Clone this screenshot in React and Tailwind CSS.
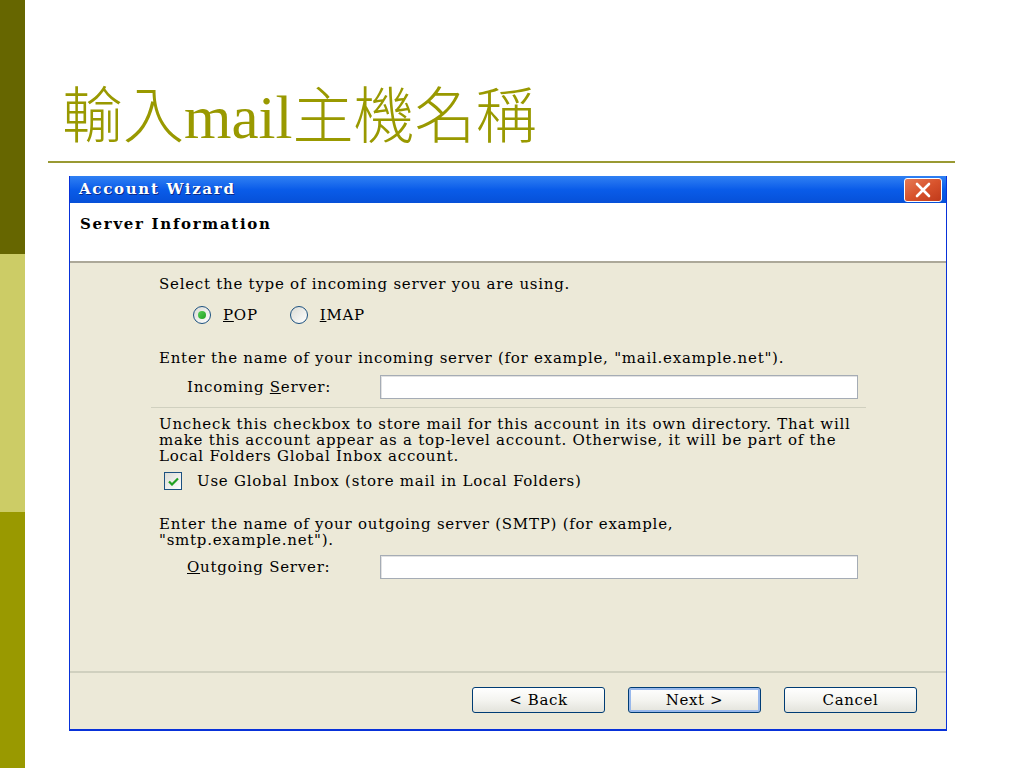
import React from 'react'

const serif = "font-['DejaVu_Serif','Liberation_Serif',serif]"

function Radio({ checked }) {
  return (
    <span className="flex items-center justify-center w-[18px] h-[18px] rounded-full border border-[#1c5180] bg-gradient-to-br from-[#dcdcd5] to-white">
      {checked && <span className="w-[8px] h-[8px] rounded-full bg-gradient-to-br from-[#55d055] to-[#21a121]" />}
    </span>
  )
}

function Checkbox() {
  return (
    <span className="flex items-center justify-center w-[18px] h-[18px] border border-[#1c5180] bg-gradient-to-br from-[#dcdcd5] to-white">
      <svg width="11" height="9" viewBox="0 0 11 9">
        <path d="M1 4.5 L4 7.5 L10 1.5" fill="none" stroke="#21a121" strokeWidth="2.2" />
      </svg>
    </span>
  )
}

function Button({ children, primary }) {
  return (
    <div className={`w-[133px] h-[26px] rounded-[3px] border border-[#003c74] bg-gradient-to-b from-white via-[#f4f4f0] to-[#e3e3db] flex items-center justify-center ${primary ? 'shadow-[inset_0_0_0_2px_#98b8ec]' : ''}`}>
      <span className="text-[15px] tracking-[0.6px] text-black">{children}</span>
    </div>
  )
}

function Field({ label, u, rest }) {
  return (
    <div className="flex items-center h-[24px]">
      <span className="w-[221px] pl-[28px]">
        {label}<span className="underline">{u}</span>{rest}
      </span>
      <div className="w-[478px] h-[24px] bg-white border border-[#a5acb5] shadow-[inset_1px_1px_0_#e2e2e2]" />
    </div>
  )
}

export default function App() {
  return (
    <div className="flex w-[1024px] h-[768px] bg-white overflow-hidden">
      <div className="flex flex-col w-[25px] shrink-0">
        <div className="h-[254px] bg-[#666600]" />
        <div className="h-[258px] bg-[#cccc66]" />
        <div className="flex-1 bg-[#999900]" />
      </div>

      <div className="flex flex-col flex-1 pt-[80px]">
        <h1 className="ml-[37px] h-[76px] text-[61px] leading-[76px] text-[#999900] font-['Liberation_Serif','Noto_Sans_CJK_TC',serif] font-light">
          輸入mail主機名稱
        </h1>
        <div className="ml-[23px] w-[907px] h-[2px] bg-[#999933] mt-[5px]" />

        <div className={`ml-[44px] mt-[13px] w-[878px] h-[555px] flex flex-col border-x border-b-2 border-[#0831d9] ${serif} text-black`}>
          <div className="h-[27px] flex items-center justify-between pl-[9px] pr-[4px] bg-gradient-to-b from-[#2f80f3] via-[#0a5ce9] to-[#0650d8]">
            <span className="text-white font-bold text-[15px] tracking-[1.7px] [text-shadow:1px_1px_0_#0a2a8a]">Account Wizard</span>
            <div className="w-[38px] h-[24px] rounded-[3px] border border-white bg-gradient-to-br from-[#e57a55] via-[#d8532c] to-[#c0391a] flex items-center justify-center">
              <svg width="18" height="16" viewBox="0 0 18 16">
                <path d="M3 2 L15 14 M15 2 L3 14" stroke="white" strokeWidth="2.6" strokeLinecap="round" />
              </svg>
            </div>
          </div>

          <div className="h-[60px] bg-white border-b-2 border-[#aca899] pl-[10px] pt-[9px]">
            <span className="font-bold text-[15px] tracking-[1.7px]">Server Information</span>
          </div>

          <div className="flex-1 bg-[#ece9d8] flex flex-col pl-[89px] pt-[13px] text-[15px] leading-[16px] tracking-[0.75px] whitespace-nowrap">
            <p>Select the type of incoming server you are using.</p>
            <div className="flex items-center mt-[14px] ml-[34px] gap-[12px]">
              <Radio checked />
              <span><span className="underline">P</span>OP</span>
              <span className="ml-[20px]"><Radio /></span>
              <span><span className="underline">I</span>MAP</span>
            </div>
            <p className="mt-[26px]">Enter the name of your incoming server (for example, "mail.example.net").</p>
            <div className="mt-[9px]">
              <Field label="Incoming " u="S" rest="erver:" />
            </div>
            <div className="mt-[8px] -ml-[8px] w-[715px] h-[2px] border-t border-[#d0d0bf] border-b-white" />
            <p className="mt-[7px]">
              Uncheck this checkbox to store mail for this account in its own directory. That will<br />
              make this account appear as a top-level account. Otherwise, it will be part of the<br />
              Local Folders Global Inbox account.
            </p>
            <div className="flex items-center mt-[8px] ml-[5px] gap-[15px]">
              <Checkbox />
              <span>Use Global Inbox (store mail in Local Folders)</span>
            </div>
            <p className="mt-[26px]">Enter the name of your outgoing server (SMTP) (for example,<br />"smtp.example.net").</p>
            <div className="mt-[7px]">
              <Field label="" u="O" rest="utgoing Server:" />
            </div>
          </div>

          <div className="h-[58px] bg-[#ece9d8] border-t-2 border-[#d0d0bf] flex items-start justify-end gap-[23px] pr-[29px] pt-[14px]">
            <Button>&lt; Back</Button>
            <Button primary>Next &gt;</Button>
            <Button>Cancel</Button>
          </div>
        </div>
      </div>
    </div>
  )
}
